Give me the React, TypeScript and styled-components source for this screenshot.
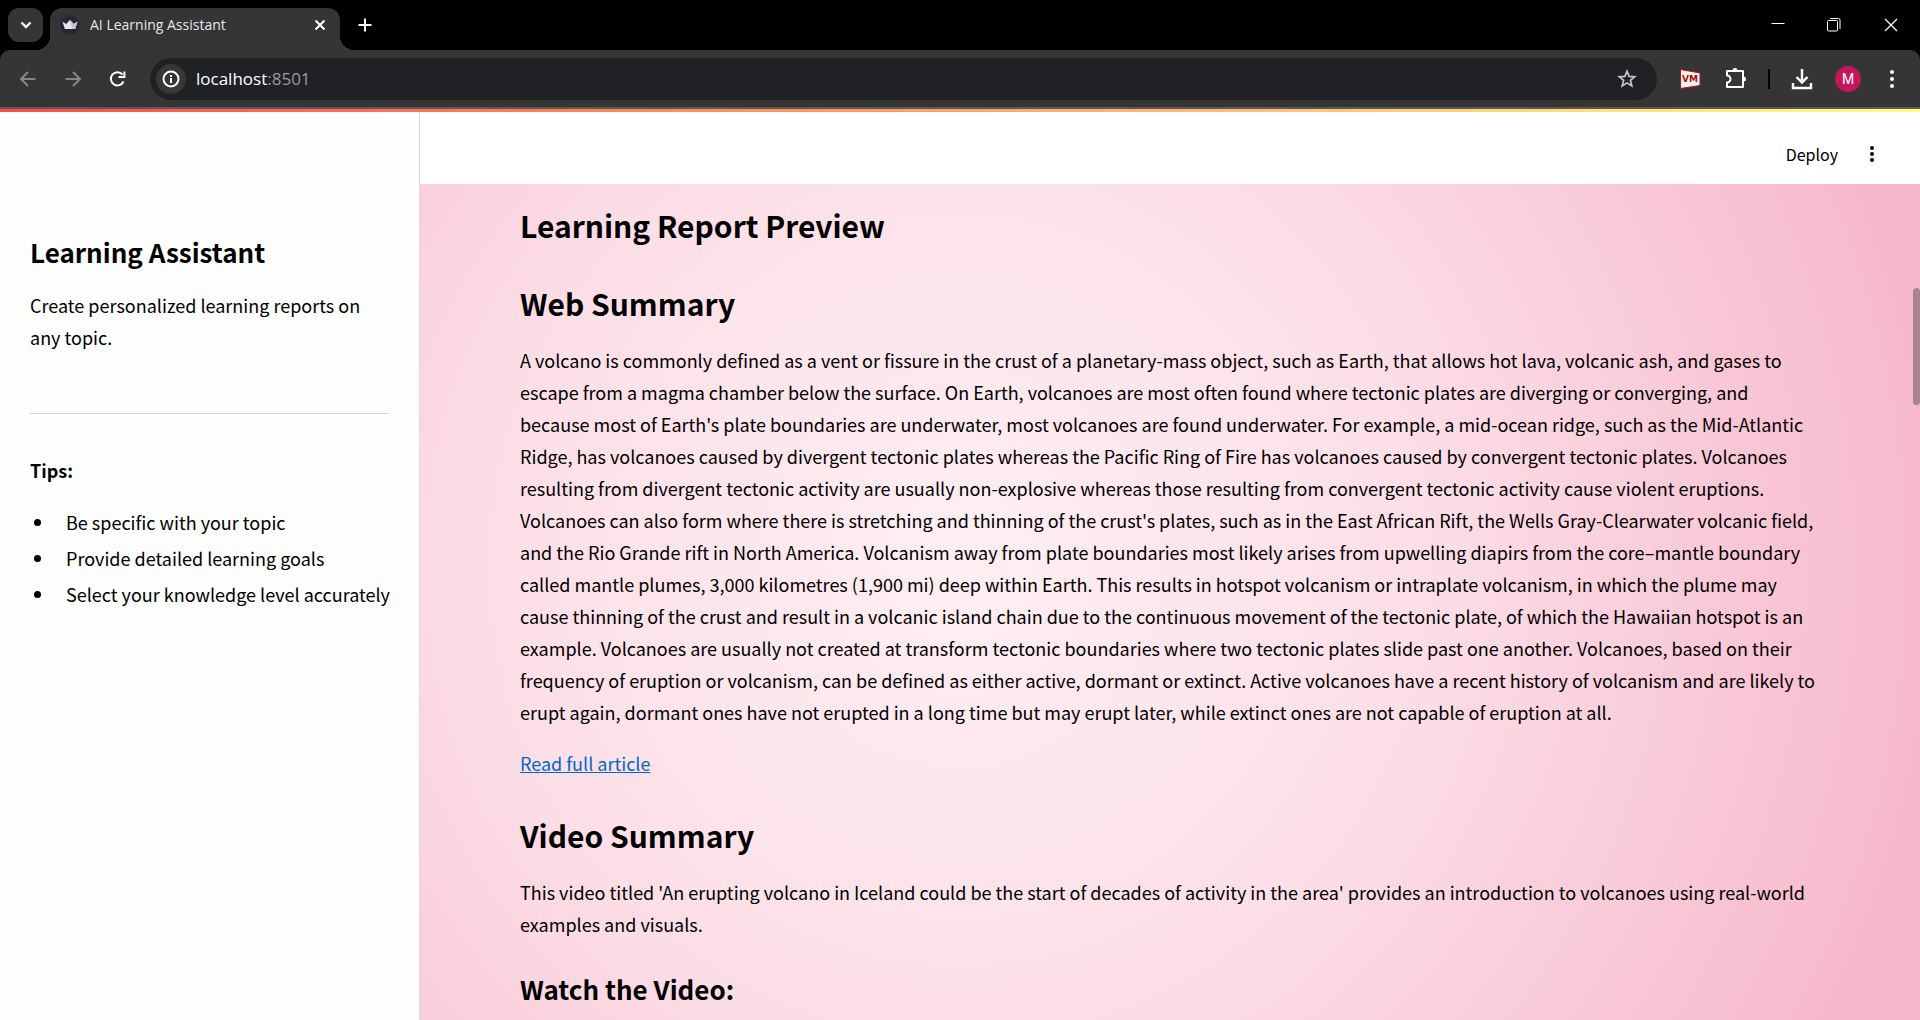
import React from "react";
import styled, { createGlobalStyle } from "styled-components";

const sans = `"Noto Sans CJK SC", "Open Sans", sans-serif`;
const ui = `"Open Sans", "Noto Sans", sans-serif`;

const GlobalStyle = createGlobalStyle`
  *, *::before, *::after { box-sizing: border-box; }
  body { margin: 0; background: #fff; color: #000; font-family: ${sans}; font-size: 18px; line-height: 32px; overflow: hidden; }
  button, input { font: inherit; }
  svg { display: block; }
`;

const Window = styled.div`
  display: flex;
  flex-direction: column;
  height: 100vh;
`;

const TabStrip = styled.header`
  display: flex;
  height: 50px;
  padding: 8px 0 0 8px;
  background: #000;
  font-family: ${ui};
`;

const IconButton = styled.button<{ $width?: number; $height?: number; $color?: string; $shade?: string; $radius?: number }>`
  display: flex;
  flex: none;
  align-items: center;
  justify-content: center;
  width: ${(p) => p.$width ?? 36}px;
  height: ${(p) => p.$height ?? 34}px;
  padding: 0;
  border: 0;
  border-radius: ${(p) => p.$radius ?? 17}px;
  background: ${(p) => p.$shade ?? "transparent"};
  color: ${(p) => p.$color ?? "#fff"};
`;

const Tab = styled.div`
  position: relative;
  display: flex;
  align-items: center;
  width: 290px;
  height: 42px;
  margin: 0 7px;
  padding: 0 2px 8px 10px;
  border-radius: 12px 12px 0 0;
  background: #353535;
  color: #e8e8e8;
  font-size: 14px;
  line-height: 20px;

  &::before,
  &::after {
    content: "";
    position: absolute;
    bottom: 0;
    width: 14px;
    height: 14px;
  }
  &::before {
    right: 100%;
    background: radial-gradient(circle at 0 0, transparent 14px, #353535 14px);
  }
  &::after {
    left: 100%;
    background: radial-gradient(circle at 100% 0, transparent 14px, #353535 14px);
  }
`;

const TabTitle = styled.span`
  flex: 1;
  padding-left: 10px;
`;

const WindowControls = styled.div`
  display: flex;
  margin-left: auto;
`;

const ToolbarBack = styled.div`
  background: #000;
`;

const Toolbar = styled.div`
  display: flex;
  align-items: center;
  height: 59px;
  padding: 0 10px;
  border-bottom: 2px solid #5a5a5a;
  border-radius: 10px 10px 0 0;
  background: #353535;
  font-family: ${ui};
`;

const NavButtons = styled.div`
  display: flex;
  gap: 9px;
  margin-right: 14px;
`;

const AddressBar = styled.div`
  display: flex;
  flex: 1;
  align-items: center;
  height: 42px;
  padding: 0 12px 0 6px;
  border-radius: 21px;
  background: #202124;
`;

const Address = styled.a`
  flex: 1;
  padding-left: 10px;
  color: #fff;
  font-size: 17px;
  line-height: 24px;
  text-decoration: none;
`;

const Port = styled.span`
  color: #9a9a9a;
`;

const Extensions = styled.div`
  display: flex;
  align-items: center;
  gap: 10px;
  margin-left: 15px;
`;

const Divider = styled.span`
  width: 2px;
  height: 20px;
  margin: 0 4px;
  background: #000;
`;

const Avatar = styled.button`
  width: 26px;
  height: 26px;
  margin: 0 3px 0 5px;
  padding: 0;
  border: 0;
  border-radius: 50%;
  background: #c2185b;
  color: #fff;
  font-family: Roboto, sans-serif;
  font-size: 14px;
  line-height: 26px;
`;

const Decoration = styled.div`
  flex: none;
  height: 3px;
  background: linear-gradient(90deg, #ff4b4b, #fffd80);
`;

const Page = styled.div`
  display: flex;
  flex: 1;
  min-height: 0;
  background: radial-gradient(circle at 50% 50%, #feeff2 0%, #fcdee7 44%, #f6b9cb 92%);
`;

const Sidebar = styled.aside`
  flex: none;
  width: 420px;
  padding: 122px 30px 0;
  border-right: 1px solid #dcdcde;
  background: #fdfdfd;
`;

const Main = styled.main`
  position: relative;
  display: flex;
  flex: 1;
  flex-direction: column;
  min-width: 0;
`;

const AppHeader = styled.div`
  display: flex;
  flex: none;
  align-items: center;
  justify-content: flex-end;
  gap: 16px;
  height: 72px;
  padding: 12px 30px 0 0;
  background: #fff;
`;

const DeployButton = styled.button`
  padding: 0;
  border: 0;
  background: none;
  color: #000;
  font-size: 16px;
  line-height: 24px;
`;

const Report = styled.article`
  padding: 19px 100px 0;
`;

const Heading = styled.h2<{ $small?: boolean }>`
  margin: 0;
  font-size: ${(p) => (p.$small ? 26 : 30)}px;
  font-weight: 600;
  line-height: ${(p) => (p.$small ? 36 : 44)}px;
`;

const Section = styled.section`
  padding-top: 34px;
`;

const Text = styled.p`
  margin: 0;
  padding-top: 19px;
`;

const Subsection = styled.section`
  padding-top: 31px;
`;

const ArticleLink = styled.a`
  color: #0068c9;
`;

const Rule = styled.hr`
  margin: 60px 0 40px;
  border: 0;
  border-top: 1px solid #d4d4d6;
`;

const Tips = styled.ul`
  margin: 0;
  padding: 20px 0 0 4px;
  list-style: none;
`;

const Tip = styled.li`
  display: flex;
  align-items: center;
  gap: 25px;
  padding-bottom: 4px;
  white-space: nowrap;

  &::before {
    content: "";
    flex: none;
    width: 7px;
    height: 7px;
    border-radius: 50%;
    background: #000;
  }
`;

const ScrollThumb = styled.div`
  position: absolute;
  top: 176px;
  right: 0;
  width: 7px;
  height: 117px;
  border-radius: 4px;
  background: #a88393;
`;

const Stroke = ({ d, size = 20, width = 2 }: { d: string; size?: number; width?: number }) => (
  <svg width={size} height={size} viewBox="0 0 20 20" fill="none" stroke="currentColor" strokeWidth={width} aria-hidden="true">
    <path d={d} />
  </svg>
);

const Dots = ({ gap, r }: { gap: number; r: number }) => (
  <svg width="20" height="20" viewBox="0 0 20 20" fill="currentColor" aria-hidden="true">
    <circle cx="10" cy={10 - gap} r={r} />
    <circle cx="10" cy="10" r={r} />
    <circle cx="10" cy={10 + gap} r={r} />
  </svg>
);

const Crown = () => (
  <svg width="20" height="20" viewBox="0 0 20 20" aria-hidden="true">
    <circle cx="10" cy="10" r="10" fill="#262730" />
    <path d="M2.500 6.500 6.200 9 10 5l3.800 4 3.700-2.500L15.200 14H4.800Z" fill="#e6e6e8" />
    <path d="M10 5l3.800 4 3.700-2.500L15.200 14H12Z" fill="#c4c4c8" />
  </svg>
);

const VmBadge = () => (
  <svg width="21" height="20" viewBox="0 0 21 20" aria-hidden="true">
    <path d="M.5.5 20 4v12.500L.5 19.500Z" fill="#f7f3f3" stroke="#b11" strokeWidth="1" />
    <text x="10" y="13" textAnchor="middle" fontFamily="DejaVu Sans" fontWeight="700" fontSize="9" fill="#a11">VM</text>
  </svg>
);

const Puzzle = () => (
  <svg width="22" height="22" viewBox="0 0 22 22" fill="none" stroke="currentColor" strokeWidth="2" strokeLinejoin="round" aria-hidden="true">
    <path d="M2 3h16v16H2v-4.500a3.500 3.500 0 0 0 0-7Z" />
    <path d="M7.500 2.500a2.500 2.500 0 0 1 5 0ZM18.500 8.500a2.500 2.500 0 0 1 0 5Z" fill="currentColor" stroke="none" />
  </svg>
);

const Download = () => (
  <svg width="22" height="22" viewBox="0 0 22 22" fill="none" stroke="currentColor" strokeWidth="2.400" aria-hidden="true">
    <path d="M11 1v13M5.500 9 11 14.500 16.500 9M2 15v5h18v-5" />
  </svg>
);

const Restore = () => (
  <svg width="14" height="14" viewBox="0 0 14 14" fill="none" stroke="currentColor" aria-hidden="true">
    <rect x=".5" y="2.500" width="10" height="10.500" rx="1" />
    <path d="M3 .5h8.500a1.500 1.500 0 0 1 1.500 1.500v9" />
  </svg>
);

export default function App() {
  return (
    <Window>
      <GlobalStyle />
      <TabStrip>
        <IconButton aria-label="Search tabs" $width={35} $shade="#353535" $radius={11}>
          <Stroke d="M5.500 7.500l4.500 4.500 4.500-4.500" width={2.400} />
        </IconButton>
        <Tab>
          <Crown />
          <TabTitle>AI Learning Assistant</TabTitle>
          <IconButton aria-label="Close tab">
            <Stroke d="M5.500 5.500l9 9M14.500 5.500l-9 9" />
          </IconButton>
        </Tab>
        <IconButton aria-label="New tab">
          <Stroke d="M10 3.500v13M3.500 10h13" />
        </IconButton>
        <WindowControls>
          <IconButton aria-label="Minimize" $width={56}>
            <Stroke d="M3.500 8.500h13" width={1} />
          </IconButton>
          <IconButton aria-label="Restore" $width={56}>
            <Restore />
          </IconButton>
          <IconButton aria-label="Close window" $width={58}>
            <Stroke d="M4 4l12 12M16 4 4 16" width={1.300} />
          </IconButton>
        </WindowControls>
      </TabStrip>
      <ToolbarBack>
        <Toolbar>
          <NavButtons>
            <IconButton aria-label="Back" $color="#858585">
              <Stroke d="M17.500 10h-14M10 3 3 10l7 7" />
            </IconButton>
            <IconButton aria-label="Forward" $color="#858585">
              <Stroke d="M2.500 10h14M10 3l7 7-7 7" />
            </IconButton>
            <IconButton aria-label="Reload">
              <Stroke d="M15.500 12.500A6.600 6.600 0 1 1 14.500 5.500M16.400 2.500v5.500H10.500" />
            </IconButton>
          </NavButtons>
          <AddressBar>
            <IconButton aria-label="Site information" $width={30} $height={30} $shade="#383838">
              <svg width="18" height="18" viewBox="0 0 18 18" fill="none" stroke="currentColor" strokeWidth="2" aria-hidden="true">
                <circle cx="9" cy="9" r="7.500" />
                <path d="M9 8v5M9 5v2" />
              </svg>
            </IconButton>
            <Address href="http://localhost:8501">
              localhost<Port>:8501</Port>
            </Address>
            <IconButton aria-label="Bookmark this page" $color="#c7c7c7">
              <Stroke d="M10 2.200 12.100 7.400 17.700 7.800 13.400 11.400 14.800 16.900 10 13.900 5.200 16.900 6.600 11.400 2.300 7.800 7.900 7.400Z" width={1.700} />
            </IconButton>
          </AddressBar>
          <Extensions>
            <IconButton aria-label="VM extension">
              <VmBadge />
            </IconButton>
            <IconButton aria-label="Extensions">
              <Puzzle />
            </IconButton>
            <Divider />
            <IconButton aria-label="Downloads">
              <Download />
            </IconButton>
            <Avatar aria-label="Profile">M</Avatar>
            <IconButton aria-label="Browser menu">
              <Dots gap={7} r={2} />
            </IconButton>
          </Extensions>
        </Toolbar>
      </ToolbarBack>
      <Decoration />
      <Page>
        <Sidebar>
          <Heading as="h1" $small>Learning Assistant</Heading>
          <Text>Create personalized learning reports on any topic.</Text>
          <Rule />
          <strong>Tips:</strong>
          <Tips>
            <Tip>Be specific with your topic</Tip>
            <Tip>Provide detailed learning goals</Tip>
            <Tip>Select your knowledge level accurately</Tip>
          </Tips>
        </Sidebar>
        <Main>
          <AppHeader>
            <DeployButton>Deploy</DeployButton>
            <IconButton aria-label="App menu" $color="#000">
              <Dots gap={6} r={2} />
            </IconButton>
          </AppHeader>
          <Report>
            <Heading>Learning Report Preview</Heading>
            <Section>
              <Heading>Web Summary</Heading>
              <Text>
                A volcano is commonly defined as a vent or fissure in the crust of a planetary-mass object, such as Earth, that allows hot lava, volcanic ash, and gases to escape from a magma chamber below the surface. On Earth, volcanoes are most often found where tectonic plates are diverging or converging, and because most of Earth's plate boundaries are underwater, most volcanoes are found underwater. For example, a mid-ocean ridge, such as the Mid-Atlantic Ridge, has volcanoes caused by divergent tectonic plates whereas the Pacific Ring of Fire has volcanoes caused by convergent tectonic plates. Volcanoes resulting from divergent tectonic activity are usually non-explosive whereas those resulting from convergent tectonic activity cause violent eruptions. Volcanoes can also form where there is stretching and thinning of the crust's plates, such as in the East African Rift, the Wells Gray-Clearwater volcanic field, and the Rio Grande rift in North America. Volcanism away from plate boundaries most likely arises from upwelling diapirs from the core–mantle boundary called mantle plumes, 3,000 kilometres (1,900 mi) deep within Earth. This results in hotspot volcanism or intraplate volcanism, in which the plume may cause thinning of the crust and result in a volcanic island chain due to the continuous movement of the tectonic plate, of which the Hawaiian hotspot is an example. Volcanoes are usually not created at transform tectonic boundaries where two tectonic plates slide past one another. Volcanoes, based on their frequency of eruption or volcanism, can be defined as either active, dormant or extinct. Active volcanoes have a recent history of volcanism and are likely to erupt again, dormant ones have not erupted in a long time but may erupt later, while extinct ones are not capable of eruption at all.
              </Text>
              <Text>
                <ArticleLink href="#article">Read full article</ArticleLink>
              </Text>
            </Section>
            <Section>
              <Heading>Video Summary</Heading>
              <Text>
                This video titled 'An erupting volcano in Iceland could be the start of decades of activity in the area' provides an introduction to volcanoes using real-world examples and visuals.
              </Text>
              <Subsection>
                <Heading as="h3" $small>Watch the Video:</Heading>
              </Subsection>
            </Section>
          </Report>
          <ScrollThumb />
        </Main>
      </Page>
    </Window>
  );
}
